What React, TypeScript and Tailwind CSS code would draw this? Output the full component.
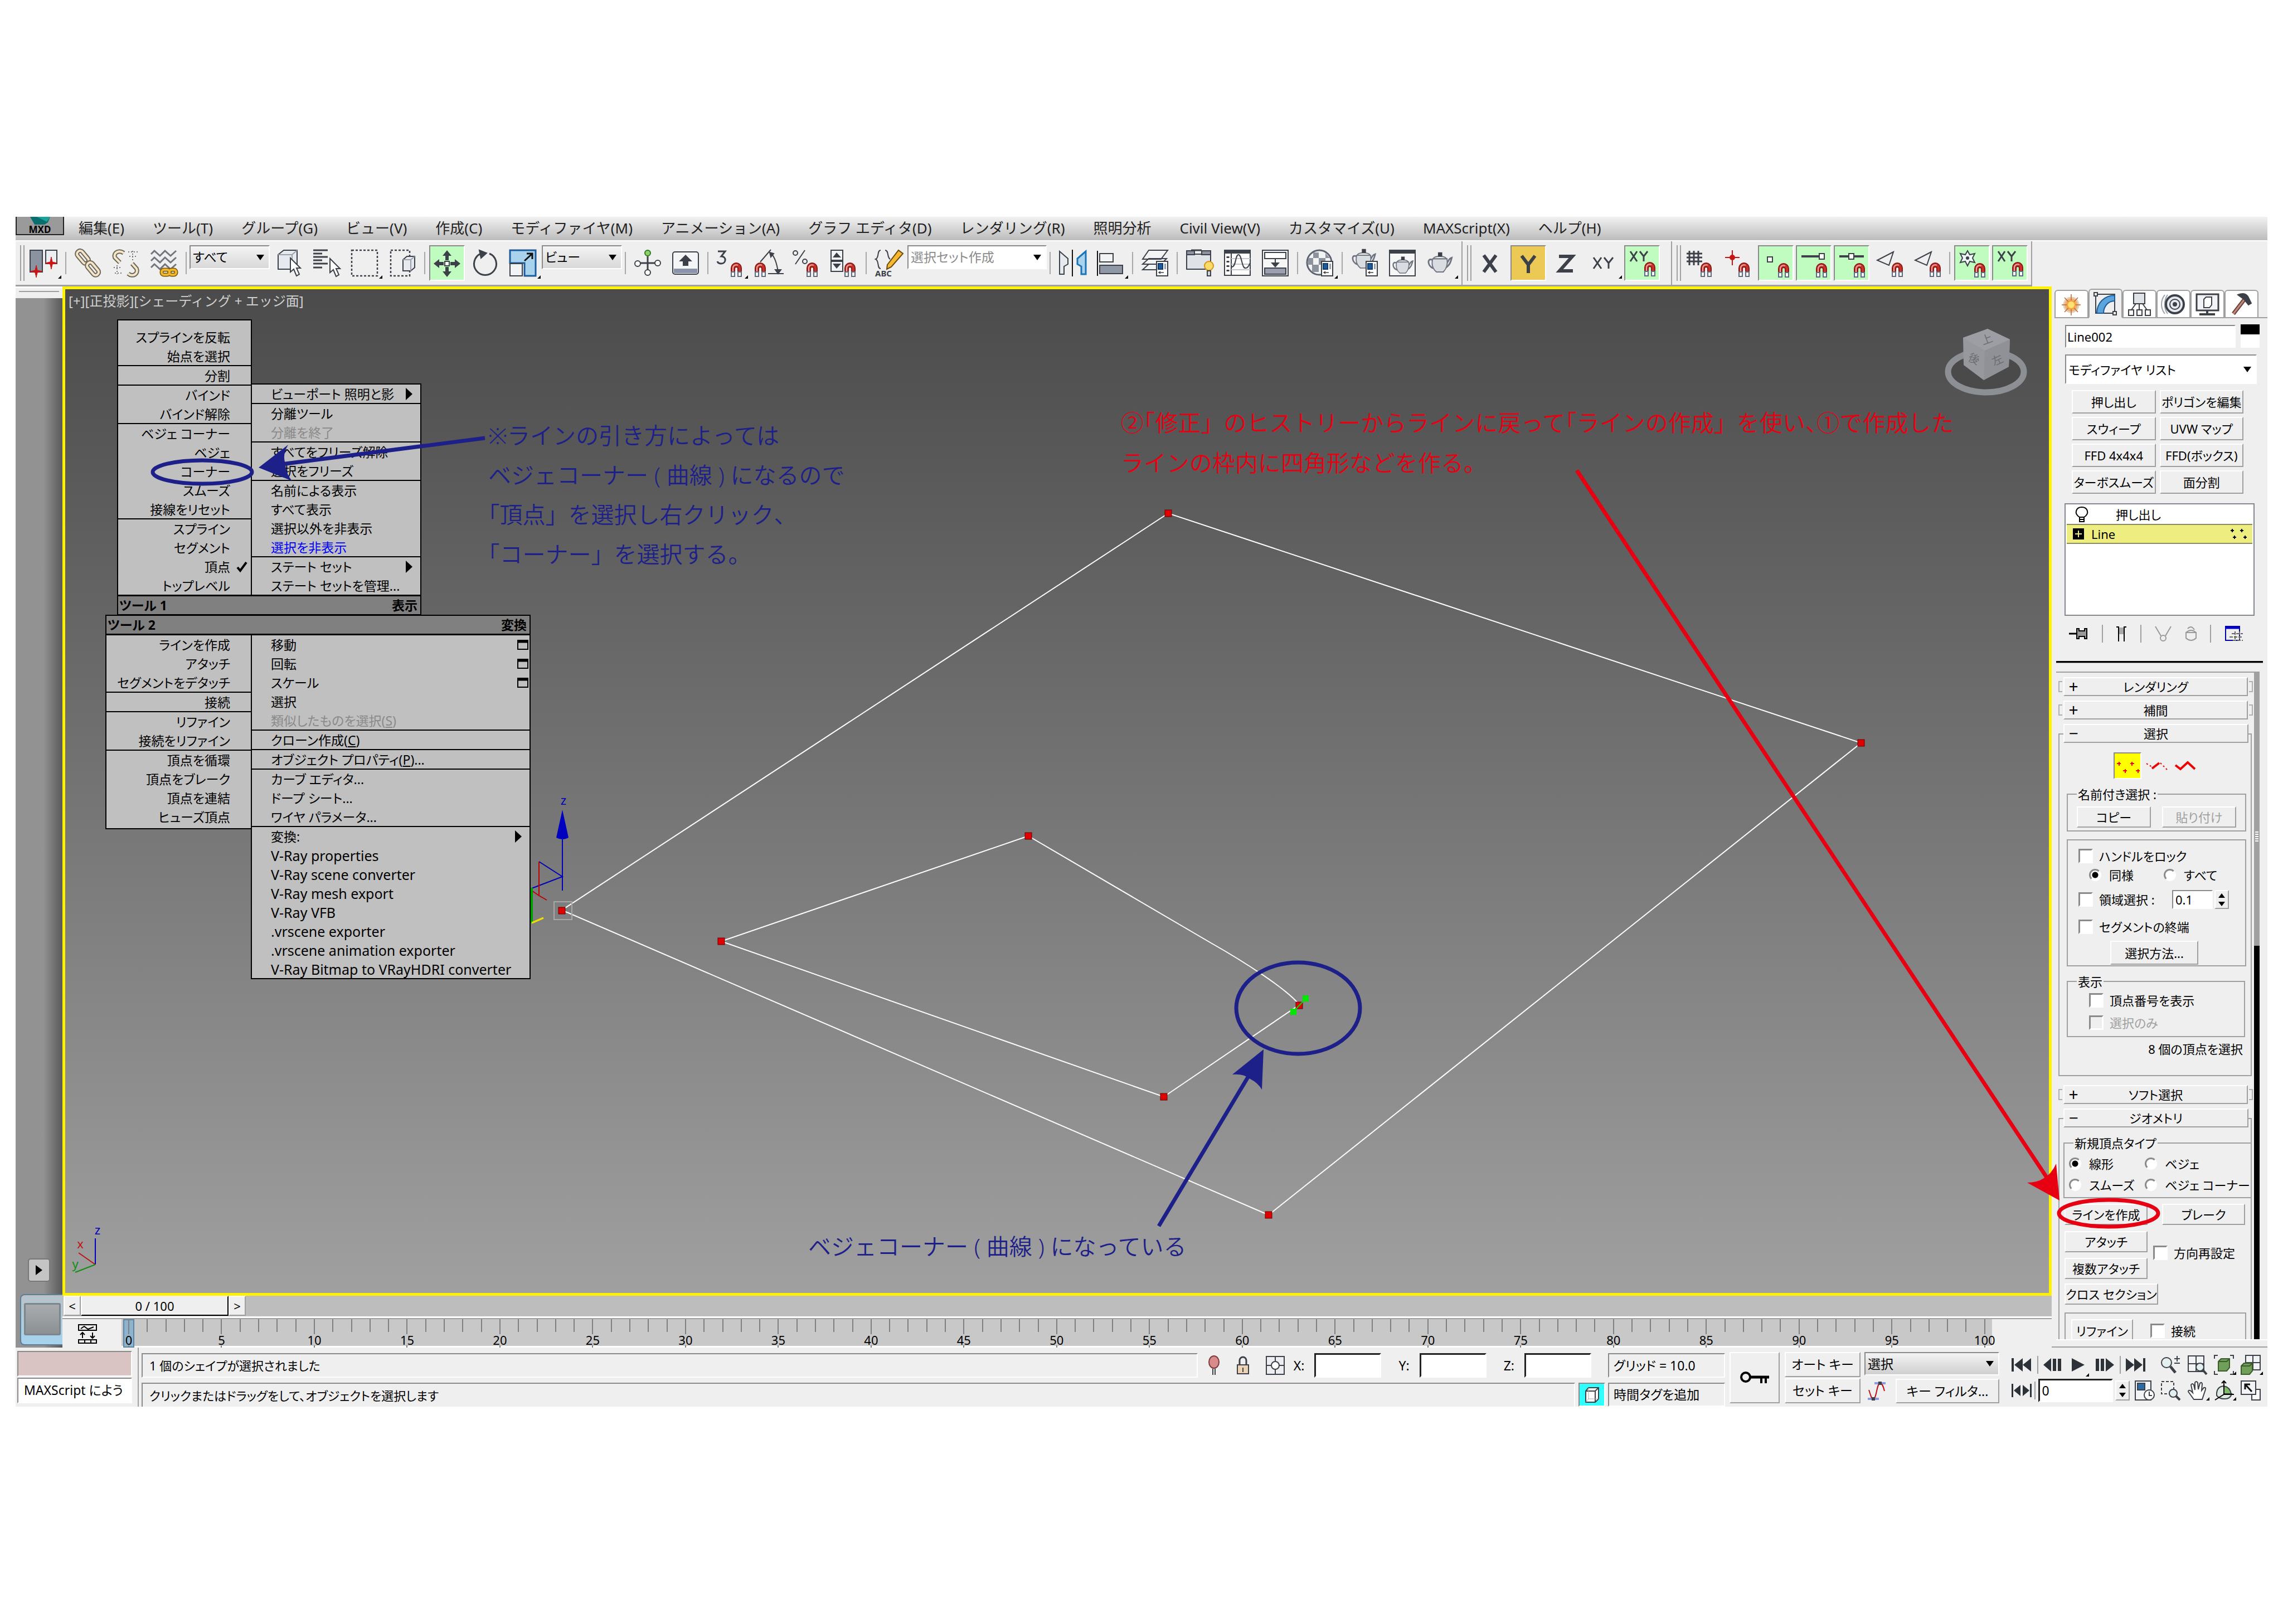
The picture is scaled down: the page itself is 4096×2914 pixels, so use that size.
import type {ReactNode} from 'react';
import clsx from 'clsx';

const ink = '#3c4048';

const sunken =
  'border-2 border-t-[#8a8a8a] border-l-[#8a8a8a] border-r-white border-b-white';
const raised =
  'border-2 border-t-white border-l-white border-r-[#a0a0a0] border-b-[#a0a0a0]';

/* ---------- icons ---------- */

const Icon = ({
  children,
  className = 'size-12',
  box = '0 0 48 48',
}: {
  children: ReactNode;
  className?: string;
  box?: string;
}) => (
  <svg
    viewBox={box}
    className={clsx('block shrink-0 overflow-visible', className)}
    fill="none"
    stroke={ink}
    strokeWidth={2}
    aria-hidden="true"
  >
    {children}
  </svg>
);

const Magnet = ({x = 25, y = 23}: {x?: number; y?: number}) => (
  <g transform={`translate(${x} ${y})`}>
    <path
      d="M1 24V10a9 9 0 0 1 18 0v14h-6V11a3 3 0 0 0-6 0v13z"
      fill="#c8322d"
      stroke="#8c1713"
      strokeWidth={2}
    />
    <path d="M4 16V10a6 6 0 0 1 9-5" stroke="#f0a9a4" strokeWidth={2} />
    <path
      d="M1 17h6v8H1zM13 17h6v8h-6z"
      fill="#fff"
      stroke="#5d6b80"
      strokeWidth={2}
    />
  </g>
);

const Star = ({x, y}: {x: number; y: number}) => (
  <path
    d={`M${x} ${y - 11}l2 9 9 2-9 2-2 9-2-9-9-2 9-2z`}
    fill="#c81414"
    stroke="#c81414"
    strokeWidth={1}
  />
);

const PageBadge = () => (
  <g>
    <path d="M27 21h20v26H27z" fill="#fff" />
    <path d="M30 25h8v10h-8z" fill="#1c5c9c" stroke="#123c70" />
    <path d="M41 25h3v10h-3z" fill="#9aa2ae" stroke="none" />
    <path d="M32 41h8M34 39l-3 2 3 2" strokeWidth={1.5} />
  </g>
);

const Cursor = ({x, y}: {x: number; y: number}) => (
  <path
    d={`M${x} ${y}v25l6-5 5 12 5-3-5-11h7z`}
    fill="#fff"
    strokeWidth={2}
  />
);

const Teapot = ({t}: {t?: string}) => (
  <g transform={t}>
    <path d="M10 17c-10-4-9 12 2 16M37 24c4-3 3-9 10-11-2 8-4 15-12 19" stroke="#6d7480" strokeWidth={3} />
    <path
      d="M11 15h27c2 12-2 20-7 25H18c-6-5-10-13-7-25z"
      fill="#d9dce1"
      stroke="#6d7480"
    />
    <path d="M12 15c2-6 22-6 25 0z" fill="#f2f3f5" stroke="#6d7480" />
    <path d="M22 4h6v6h-6z" fill={ink} />
  </g>
);

const icons: Record<string, ReactNode> = {
  undo: (
    <>
      <path d="M0 1h22v39H0z" fill="#8b93a0" />
      <path d="M28 1h20v24H28z" fill="#eceef2" />
      <Star x={11} y={39} />
      <Star x={38} y={24} />
    </>
  ),
  link: (
    <g strokeWidth={8} stroke="#6e6758">
      <rect x="2" y="8" width="26" height="11" rx="5" transform="rotate(50 15 13)" />
      <rect x="2" y="8" width="26" height="11" rx="5" transform="rotate(50 15 13)" stroke="#f4e6c8" strokeWidth={4} />
      <rect x="20" y="29" width="26" height="11" rx="5" transform="rotate(50 33 34)" />
      <rect x="20" y="29" width="26" height="11" rx="5" transform="rotate(50 33 34)" stroke="#f4e6c8" strokeWidth={4} />
    </g>
  ),
  unlink: (
    <>
      <g stroke="#6e6758" strokeWidth={8}>
        <path d="M20 6C12 0 1 5 4 14l9 9M28 43c8 7 19 0 15-9l-8-9" />
        <path d="M20 6C12 0 1 5 4 14l9 9M28 43c8 7 19 0 15-9l-8-9" stroke="#f4e6c8" strokeWidth={4} />
      </g>
      <path d="M28 4h18M30 12h14M36 2v18M2 32h14M4 42h12M8 28v16" strokeDasharray="2 3" stroke="#777" />
    </>
  ),
  wave: (
    <>
      <path d="M1 8l6-6 10 9 9-9 10 9 10-9M1 20l6-6 10 9 9-9 10 9 10-9M1 32l6-6 10 9 9-9 10 9 10-9" strokeWidth={3} stroke="#70757e" />
      <g stroke="#7a5500" strokeWidth={7}>
        <rect x="20" y="36" width="14" height="9" rx="4" />
        <rect x="34" y="36" width="12" height="9" rx="4" />
        <rect x="20" y="36" width="14" height="9" rx="4" stroke="#f1b62b" strokeWidth={4} />
        <rect x="34" y="36" width="12" height="9" rx="4" stroke="#f1b62b" strokeWidth={4} />
      </g>
    </>
  ),
  select: (
    <>
      <path d="M5 9l10-8h24v26l-9 8H5z" fill="#e6e9ee" />
      <path d="M5 9h25l9-8M30 9v26" stroke="#9aa1ac" />
      <Cursor x={27} y={15} />
    </>
  ),
  byName: (
    <>
      <path d="M0 1h26M0 7h16M0 13h26M0 19h16M0 25h26M0 32h16" strokeWidth={3} />
      <Cursor x={30} y={16} />
    </>
  ),
  region: <path d="M1 1h46v46H1z" strokeDasharray="4 3" strokeWidth={2.5} />,
  crossing: (
    <>
      <path d="M3 1h34v46H3z" strokeDasharray="4 3" strokeWidth={2.5} />
      <path d="M25 18l7-6h14v20l-7 6H25z" fill="#e6e9ee" />
      <path d="M25 18h14l7-6M39 18v20" stroke="#9aa1ac" />
    </>
  ),
  move: (
    <>
      <path d="M24 1l8 10h-5v8h-6v-8h-5zM24 49l8-10h-5v-8h-6v8h-5zM0 25l10-8v5h8v6h-8v5zM48 25l-10-8v5h-8v6h8v5z" fill={ink} stroke="none" />
      <path d="M20 21h8v8h-8z" fill="#fff" />
    </>
  ),
  rotate: (
    <>
      <path d="M32 7a20 20 0 1 1-15 0" strokeWidth={3} />
      <path d="M14 1l13 5-10 9z" fill={ink} />
    </>
  ),
  scale: (
    <>
      <path d="M1 1h46v46H27V24H1z" fill="#a9d3ec" stroke="#1c5c9c" strokeWidth={3} />
      <path d="M1 25h22v22H1z" fill="#f2f3f5" />
      <path d="M27 20L40 8M31 7h10v10" strokeWidth={3} stroke="#111" />
    </>
  ),
  pivot: (
    <>
      <path d="M24 12v24M11 24h26" strokeWidth={3} />
      <circle cx="24" cy="6" r="5" fill="#8fcf70" stroke="#2f7a1c" />
      <circle cx="6" cy="25" r="5" fill="#fff" />
      <circle cx="42" cy="24" r="5" fill="#fff" />
      <circle cx="24" cy="41" r="5" fill="#fff" />
    </>
  ),
  keyboard: (
    <>
      <rect x="1" y="4" width="46" height="40" rx="4" fill="#f4f5f7" />
      <path d="M3 34h42v8H3z" fill="#8b93a8" stroke="none" />
      <path d="M24 9l12 12h-7v8H19v-8h-7z" fill={ink} stroke="none" />
    </>
  ),
  snap3: (
    <>
      <path d="M2 3h13l-7 9c10 0 9 13 0 13-4 0-6-1-7-4" strokeWidth={3} />
      <Magnet />
    </>
  ),
  angle: (
    <>
      <path d="M10 22L29 0M29 6c8 8 11 20 13 34M24 43h28" />
      <path d="M27 5l7 2-5 6zM37 36h10l-5 7z" fill={ink} />
      <Magnet x={0} />
    </>
  ),
  percent: (
    <>
      <circle cx="5" cy="6" r="4" />
      <circle cx="22" cy="21" r="4" />
      <path d="M22 1L5 26" />
      <Magnet />
    </>
  ),
  spinner: (
    <>
      <path d="M1 1h21v18H1zM1 21h21v18H1z" fill="#f2f3f5" />
      <path d="M4 14l7-9 8 9zM4 25l7 9 8-9z" fill={ink} stroke="none" />
      <Magnet />
    </>
  ),
  named: (
    <>
      <path d="M10 1C3 1 8 14 1 17c7 3 2 17 9 17M18 1c7 0 3 13 9 16" />
      <path d="M22 27L42 1l8 6-21 24-8 4z" fill="#f5b82e" stroke="#6b4a12" />
      <text x="0" y="48" fontSize="15" fontWeight="700" fill={ink} stroke="none" fontFamily="Noto Sans">
        ABC
      </text>
    </>
  ),
  mirror: (
    <>
      <path d="M1 3l15 13v10l-7 4v14H1z" fill="#e6e9ee" />
      <path d="M24 0v48" stroke="#111" />
      <path d="M48 3L33 16v10l7 4v14h8z" fill="#a9d3ec" stroke="#1c74b8" strokeWidth={3} />
    </>
  ),
  align: (
    <>
      <path d="M1 2v45" stroke="#111" />
      <path d="M5 7h24v15H5z" fill="#f2f3f5" />
      <path d="M5 28h41v15H5z" fill="#9198a5" />
    </>
  ),
  layers: (
    <>
      <path d="M13 26h32l-10 10H2zM13 16h32L35 26H2zM13 1h34L35 17H2z" fill="#f2f3f5" />
      <PageBadge />
    </>
  ),
  ribbon: (
    <>
      <path d="M1 8h43v27H1z" fill="#dfe2e7" />
      <path d="M1 2h14v7H1zM28 2h16v7H28z" fill="#8b93a0" />
      <path d="M9 1h19" strokeWidth={3} />
      <circle cx="41" cy="29" r="8" fill="#fbdc6a" stroke="#d99414" />
      <path d="M38 38h6v9h-6z" fill="#cfd4dc" />
    </>
  ),
  curve: (
    <>
      <path d="M1 1h46v45H1z" fill="#fff" />
      <path d="M1 4h46" strokeWidth={6} />
      <path d="M13 6v40" />
      <path d="M7 12v30" strokeDasharray="3 5" strokeWidth={5} />
      <path d="M13 16h34M13 26h34M13 36h34" stroke="#c4c8ce" />
      <path d="M14 31c8 0 6-22 12-22s6 26 13 24c4 0 5-4 8-9" />
    </>
  ),
  schematic: (
    <>
      <path d="M1 1h46v46H1z" fill="#f6f6f6" />
      <path d="M5 5h38v11H5z" fill="#fff" />
      <path d="M5 33h38v11H5z" fill="#9aa0b0" />
      <path d="M24 17v12" />
      <path d="M16 23h16l-8 9z" fill={ink} stroke="none" />
    </>
  ),
  material: (
    <>
      <circle cx="23" cy="23" r="22" fill="#f2f3f5" stroke="#5d636d" strokeWidth={3} />
      <path d="M12 5h10v10H12zM22 15h12v12H22zM10 27h12v13H10zM34 6l8 9h-8zM3 15h9v12H3z" fill="#8d939d" stroke="none" />
      <PageBadge />
    </>
  ),
  renderSetup: (
    <>
      <Teapot t="translate(0 -4) scale(.92)" />
      <PageBadge />
    </>
  ),
  frame: (
    <>
      <path d="M1 1h46v46H1z" fill="#f6f6f6" />
      <path d="M1 4h46" strokeWidth={6} />
      <Teapot t="translate(5 10) scale(.8)" />
    </>
  ),
  teapot: <Teapot t="translate(0 2) scale(.95)" />,
  axisX: <path d="M12 10l22 30M34 10L12 40" strokeWidth={6} />,
  axisY: <path d="M12 11l12 16 12-16M24 26v16" strokeWidth={6} />,
  axisZ: <path d="M11 12h24L12 38h24" strokeWidth={6} />,
  axisXY: <path d="M5 14l14 20M19 14L5 34M24 14l8 10 8-10M32 24v10" strokeWidth={3} />,
  axisXYSnap: (
    <>
      <path d="M3 3l12 18M15 3L3 21M20 3l7 9 7-9M27 12v9" strokeWidth={3} />
      <Magnet x={28} y={22} />
    </>
  ),
  grid: (
    <>
      <path d="M0 7h28M0 14h28M0 21h28M5 2v26M13 2v26M21 2v26" strokeWidth={3} />
      <Magnet />
    </>
  ),
  pivotSnap: (
    <>
      <path d="M14 1v27M1 14h26" stroke="#c81414" />
      <circle cx="14" cy="14" r="5" fill="#c81414" stroke="none" />
      <Magnet />
    </>
  ),
  vertexSnap: (
    <>
      <path d="M9 13h9v9H9z" fill="#fff" />
      <Magnet x={28} y={24} />
    </>
  ),
  endSnap: (
    <>
      <path d="M2 12h34" strokeWidth={4} />
      <path d="M34 7h9v10h-9z" fill="#fff" />
      <Magnet x={28} y={24} />
    </>
  ),
  midSnap: (
    <>
      <path d="M2 12h44" strokeWidth={4} />
      <path d="M19 7h9v10h-9z" fill="#fff" />
      <Magnet x={28} y={24} />
    </>
  ),
  faceSnap: (
    <>
      <path d="M31 4L2 19l21 9z" />
      <Magnet x={28} />
    </>
  ),
  frozen: (
    <>
      <path d="M16 2l4 7 9-2-4 8 4 8-9-2-4 8-4-8-9 2 4-8-4-8 9 2z" fill="#eef6fa" />
      <circle cx="16" cy="15" r="2" fill={ink} />
      <Magnet x={28} y={24} />
    </>
  ),
};

/* ---------- toolbar ---------- */

type Tool = {icon: string; label: string; on?: 'green' | 'gold'; flyout?: boolean};

const ToolButton = ({icon, label, on, flyout}: Tool) => (
  <div className="w-[68px] h-16 shrink-0 flex items-center justify-center">
    <button
      type="button"
      aria-label={label}
      className={clsx(
        'relative size-16 flex items-center justify-center',
        on && sunken,
        on === 'green' && 'bg-[#c0fcc0]',
        on === 'gold' && 'bg-[#ecc954]',
      )}
    >
      <Icon>{icons[icon]}</Icon>
      {flyout && (
        <svg viewBox="0 0 6 6" className="absolute right-0 bottom-1 size-[6px]" aria-hidden="true">
          <path d="M6 0v6H0z" fill="#000" />
        </svg>
      )}
    </button>
  </div>
);

const Tools = ({items}: {items: Tool[]}) => (
  <>
    {items.map((t) => (
      <ToolButton key={t.label} {...t} />
    ))}
  </>
);

const Sep = () => (
  <div className="w-3 shrink-0 flex justify-center">
    <div className="w-[2px] h-10 bg-[#a8a8a8]" />
  </div>
);

const Grip = () => (
  <div className="flex gap-1 h-16 ml-2 shrink-0">
    <div className="w-[2px] bg-[#a0a0a0]" />
    <div className="w-[2px] bg-[#a0a0a0]" />
  </div>
);

const Combo = ({
  label,
  value,
  className,
}: {
  label: string;
  value: string;
  className?: string;
}) => (
  <div className={clsx('relative shrink-0', sunken, className)}>
    <select
      aria-label={label}
      className="appearance-none block size-full px-1 leading-none outline-none bg-transparent"
    >
      <option>{value}</option>
    </select>
    <svg
      viewBox="0 0 14 10"
      className="absolute right-2 top-1/2 -mt-[5px] w-[14px] h-[10px] pointer-events-none"
      aria-hidden="true"
    >
      <path d="M0 0h14L7 10z" fill="#000" />
    </svg>
  </div>
);

const menus = [
  '編集(E)',
  'ツール(T)',
  'グループ(G)',
  'ビュー(V)',
  '作成(C)',
  'モディファイヤ(M)',
  'アニメーション(A)',
  'グラフ エディタ(D)',
  'レンダリング(R)',
  '照明分析',
  'Civil View(V)',
  'カスタマイズ(U)',
  'MAXScript(X)',
  'ヘルプ(H)',
];

const MenuBar = () => (
  <nav className="h-[42px] shrink-0 flex items-start bg-linear-to-b from-[#f2f2f2] to-[#bcbcbc]">
    <button
      type="button"
      className="w-[87px] h-[33px] shrink-0 border-2 border-t-0 border-[#222] bg-[#9a9a9a] flex flex-col items-center justify-between text-[17px] leading-[16px] font-bold"
    >
      <svg viewBox="0 0 36 14" className="w-9 h-[14px]" aria-hidden="true">
        <path d="M0 0h36l-4 10-6 4H8z" fill="#0b6e6e" />
        <path d="M12 0h24l-6 9z" fill="#19a39d" />
      </svg>
      MXD
    </button>
    <div className="flex gap-[51px] pl-[26px] pt-[5px] text-[26px] leading-[30px] whitespace-nowrap text-[#222]">
      {menus.map((m) => (
        <button type="button" key={m}>
          {m}
        </button>
      ))}
    </div>
  </nav>
);

const MainToolbar = () => (
  <div className="h-[83px] shrink-0 flex bg-[#efefef] border-t-2 border-t-white text-[23px] [font-feature-settings:'palt']">
    <div className="flex items-center border-b-3 border-r-2 border-[#a0a0a0] pr-1">
      <Grip />
      <Tools items={[{icon: 'undo', label: 'シーン状態', flyout: true}]} />
      <Sep />
      <Tools
        items={[
          {icon: 'link', label: 'リンク'},
          {icon: 'unlink', label: 'リンク解除'},
          {icon: 'wave', label: 'スペース ワープにバインド'},
        ]}
      />
      <Sep />
      <Combo label="選択フィルタ" value="すべて" className="w-36 h-[43px] self-start mt-[7px] bg-linear-to-b from-[#f4f4f4] to-[#d8d8d8]" />
      <Tools
        items={[
          {icon: 'select', label: 'オブジェクト選択'},
          {icon: 'byName', label: '名前による選択'},
          {icon: 'region', label: '矩形選択領域', flyout: true},
          {icon: 'crossing', label: '領域内/交差'},
        ]}
      />
      <Sep />
      <Tools
        items={[
          {icon: 'move', label: '選択して移動', on: 'green'},
          {icon: 'rotate', label: '選択して回転'},
          {icon: 'scale', label: '選択してスケール', flyout: true},
        ]}
      />
      <Combo label="参照座標系" value="ビュー" className="w-36 h-[43px] self-start mt-[7px] bg-linear-to-b from-[#f4f4f4] to-[#d8d8d8]" />
      <Sep />
      <Tools
        items={[
          {icon: 'pivot', label: '基点の中心'},
          {icon: 'keyboard', label: 'キーボード ショートカット'},
        ]}
      />
      <Sep />
      <Tools
        items={[
          {icon: 'snap3', label: 'スナップ', flyout: true},
          {icon: 'angle', label: '角度スナップ'},
          {icon: 'percent', label: 'パーセント スナップ'},
          {icon: 'spinner', label: 'スピナー スナップ'},
        ]}
      />
      <Sep />
      <Tools items={[{icon: 'named', label: '名前付き選択セットを編集'}]} />
      <Combo label="名前付き選択セット" value="選択セット作成" className="w-[250px] h-[43px] self-start mt-[7px] bg-white text-[#8a8a8a]" />
      <Sep />
      <Tools
        items={[
          {icon: 'mirror', label: 'ミラー'},
          {icon: 'align', label: '位置合わせ', flyout: true},
        ]}
      />
      <Sep />
      <Tools items={[{icon: 'layers', label: '画層を管理'}]} />
      <Sep />
      <Tools
        items={[
          {icon: 'ribbon', label: 'リボン'},
          {icon: 'curve', label: 'カーブ エディタ'},
          {icon: 'schematic', label: 'スケマティック ビュー'},
        ]}
      />
      <Sep />
      <Tools items={[{icon: 'material', label: 'マテリアル エディタ', flyout: true}]} />
      <Sep />
      <Tools
        items={[
          {icon: 'renderSetup', label: 'レンダリング設定'},
          {icon: 'frame', label: 'レンダリング フレーム ウィンドウ'},
          {icon: 'teapot', label: 'プロダクション レンダリング', flyout: true},
        ]}
      />
    </div>
    <div className="flex items-center border-b-3 border-r-2 border-[#a0a0a0] pr-[18px]">
      <Grip />
      <Tools
        items={[
          {icon: 'axisX', label: 'X'},
          {icon: 'axisY', label: 'Y', on: 'gold'},
          {icon: 'axisZ', label: 'Z'},
          {icon: 'axisXY', label: 'XY', flyout: true},
          {icon: 'axisXYSnap', label: 'XY スナップ', on: 'green'},
        ]}
      />
    </div>
    <div className="flex items-center border-b-3 border-r-2 border-[#a0a0a0] pr-1">
      <Grip />
      <Tools
        items={[
          {icon: 'grid', label: 'グリッド点にスナップ'},
          {icon: 'pivotSnap', label: '基点にスナップ'},
          {icon: 'vertexSnap', label: '頂点にスナップ', on: 'green'},
          {icon: 'endSnap', label: '端点にスナップ', on: 'green'},
          {icon: 'midSnap', label: '中点にスナップ', on: 'green'},
          {icon: 'faceSnap', label: 'エッジにスナップ'},
          {icon: 'faceSnap', label: '面にスナップ'},
        ]}
      />
      <Sep />
      <Tools
        items={[
          {icon: 'frozen', label: 'フリーズ オブジェクトにスナップ', on: 'green'},
          {icon: 'axisXYSnap', label: '軸制約でスナップ', on: 'green'},
        ]}
      />
    </div>
  </div>
);

/* ---------- viewport ---------- */

const Vertex = ({x, y}: {x: number; y: number}) => (
  <rect x={x - 6} y={y - 6} width="12" height="12" fill="#e00000" stroke="#600" strokeWidth={1} />
);

const Scene = () => (
  <svg
    viewBox="116 518 3559 1801"
    preserveAspectRatio="none"
    className="absolute inset-0 size-full"
    fill="none"
    strokeWidth={2}
    aria-hidden="true"
  >
    <path d="M1007 1632L2095 920l1243 412-1063 847z" stroke="#fff" />
    <path d="M1844 1499L1293 1688l794 279 243-165C2310 1775 2230 1724 2170 1690z" stroke="#fff" />
    <rect x="993" y="1617" width="32" height="32" stroke="#a8a8a8" />
    <path d="M1008 1500v97M966 1545l42 27-55 21" stroke="#0000b8" />
    <path d="M1008 1452l-11 50q11 6 22 0z" fill="#0000c0" />
    <path d="M966 1545v61l14 8M953 1597l13 9" stroke="#c00000" />
    <path d="M953 1592v63" stroke="#00a000" strokeWidth={4} />
    <path d="M953 1655l21-9" stroke="#f0e000" strokeWidth={3} />
    {[
      [1007, 1633],
      [2095, 920],
      [3338, 1332],
      [2275, 2179],
      [1844, 1499],
      [1293, 1688],
      [2087, 1967],
      [2330, 1803],
    ].map(([x, y]) => (
      <Vertex key={`${x}-${y}`} x={x} y={y} />
    ))}
    <path d="M2320 1814l22-24" stroke="#00e000" />
    <path d="M2336 1785h11v11h-11zM2314 1809h11v11h-11z" fill="#00e800" />
    <path d="M170 2221v47" stroke="#0000b8" />
    <path d="M170 2268l-30-21" stroke="#b81414" />
    <path d="M170 2268l-36 14" stroke="#109010" />
    <g fontFamily="Noto Sans" textAnchor="middle" stroke="none">
      <text x="1010" y="1443" fontSize="22" fill="#0000b8">z</text>
      <text x="174" y="2214" fontSize="22" fill="#0000b8">z</text>
      <text x="143" y="2239" fontSize="22" fill="#c01414">x</text>
      <text x="134" y="2275" fontSize="22" fill="#109010">y</text>
    </g>
    <ellipse cx="3562" cy="666" rx="68" ry="37" fill="#4a4a4a" stroke="#8c8f94" strokeWidth={11} />
    <path d="M3565 589l40 19-2 49-45 24-36-27-1-49z" fill="#96989d" />
    <path d="M3565 589l40 19-45 20-39-23z" fill="#9c9ea3" />
    <path d="M3560 628l45-20-2 49-45 24z" fill="#8f9196" />
    <g fontFamily="Noto Sans CJK JP" fill="#6c6e73" stroke="none" textAnchor="middle" fontSize="20">
      <text x="3564" y="615" transform="rotate(-20 3564 609)">上</text>
      <text x="3540" y="650" transform="rotate(25 3540 644)">後</text>
      <text x="3583" y="652" transform="rotate(-25 3583 646)">左</text>
    </g>
  </svg>
);

type Entry = {text: string; key?: string; tail?: string; mark?: 'sub' | 'check' | 'box'; tone?: string};

const e = (text: string, extra: Partial<Entry> = {}): Entry => ({text, ...extra});

const toolsOne: Entry[][] = [
  [e('スプラインを反転'), e('始点を選択')],
  [e('分割')],
  [e('バインド'), e('バインド解除')],
  [e('ベジェ コーナー'), e('ベジェ'), e('コーナー'), e('スムーズ'), e('接線をリセット')],
  [e('スプライン'), e('セグメント'), e('頂点', {mark: 'check'}), e('トップレベル')],
];

const display: Entry[][] = [
  [e('ビューポート 照明と影', {mark: 'sub'})],
  [e('分離ツール'), e('分離を終了', {tone: 'text-[#8a8a8a]'})],
  [e('すべてをフリーズ解除'), e('選択をフリーズ')],
  [
    e('名前による表示'),
    e('すべて表示'),
    e('選択以外を非表示'),
    e('選択を非表示', {tone: 'text-[#0000ff]'}),
  ],
  [e('ステート セット', {mark: 'sub'}), e('ステート セットを管理...')],
];

const toolsTwo: Entry[][] = [
  [e('ラインを作成'), e('アタッチ'), e('セグメントをデタッチ')],
  [e('接続')],
  [e('リファイン'), e('接続をリファイン')],
  [e('頂点を循環'), e('頂点をブレーク'), e('頂点を連結'), e('ヒューズ頂点')],
];

const latin = {tone: 'text-[25px]'};

const transform: Entry[][] = [
  [
    e('移動', {mark: 'box'}),
    e('回転', {mark: 'box'}),
    e('スケール', {mark: 'box'}),
    e('選択'),
    e('類似したものを選択(', {key: 'S', tail: ')', tone: 'text-[#8a8a8a]'}),
  ],
  [e('クローン作成(', {key: 'C', tail: ')'})],
  [e('オブジェクト プロパティ(', {key: 'P', tail: ')...'})],
  [e('カーブ エディタ...'), e('ドープ シート...'), e('ワイヤ パラメータ...')],
  [
    e('変換:', {mark: 'sub'}),
    e('V-Ray properties', latin),
    e('V-Ray scene converter', latin),
    e('V-Ray mesh export', latin),
    e('V-Ray VFB', latin),
    e('.vrscene exporter', latin),
    e('.vrscene animation exporter', latin),
    e('V-Ray Bitmap to VRayHDRI converter', latin),
  ],
];

const Mark = ({kind}: {kind: Entry['mark']}) => {
  if (kind === 'check')
    return (
      <Icon box="0 0 20 20" className="size-5">
        <path d="M2 11l5 6L18 2" stroke="#000" strokeWidth={4} />
      </Icon>
    );
  if (kind === 'box')
    return (
      <Icon box="0 0 20 18" className="w-5 h-[18px]">
        <path d="M1 1h18v16H1z" fill="#c0c0c0" stroke="#000" />
        <path d="M1 3h18" stroke="#000" strokeWidth={5} />
      </Icon>
    );
  return (
    <Icon box="0 0 12 22" className="w-3 h-[22px]">
      <path d="M0 0l12 11L0 22z" fill="#000" stroke="none" />
    </Icon>
  );
};

const Quad = ({
  groups,
  align,
  className,
}: {
  groups: Entry[][];
  align: 'left' | 'right';
  className?: string;
}) => (
  <div className={clsx('bg-[#c0c0c0] border-2 border-black', className)}>
    {groups.map((group, i) => (
      <div key={i} className={clsx('-mb-px', i > 0 && 'border-t-2 border-black')}>
        {group.map(({text, key, tail, mark, tone}) => (
          <button
            type="button"
            key={text}
            className={clsx(
              'w-full h-[34px] flex items-center whitespace-nowrap',
              align === 'right' ? 'justify-end' : 'pl-[34px] justify-between',
              mark === 'box' && 'pr-[2px]',
              mark === 'sub' && 'pr-[14px]',
              align === 'right' && (mark ? 'pr-[6px] gap-[11px]' : 'pr-[37px]'),
              tone,
            )}
          >
            <span>
              {text}
              {key && <u>{key}</u>}
              {tail}
            </span>
            {mark && <Mark kind={mark} />}
          </button>
        ))}
      </div>
    ))}
  </div>
);

const QuadTitle = ({left, right}: {left: string; right: string}) => (
  <div className="flex h-9 -my-px border-2 border-black bg-[#808080] font-bold items-center">
    <span className="pl-[2px] w-[239px]">{left}</span>
    <span className="flex-1 text-right pr-[5px]">{right}</span>
  </div>
);

const QuadMenu = () => (
  <div className="absolute left-[72px] top-[54px] text-[23px] leading-none [font-feature-settings:'palt']">
    <div className="ml-[21px] w-[546px]">
      <div className="flex items-end">
        <Quad groups={toolsOne} align="right" className="w-[242px] pt-[13px]" />
        <Quad groups={display} align="left" className="flex-1 -ml-[2px]" />
      </div>
      <QuadTitle left="ツール 1" right="表示" />
    </div>
    <div className="w-[763px]">
      <QuadTitle left="ツール 2" right="変換" />
      <div className="flex items-start">
        <Quad groups={toolsTwo} align="right" className="w-[263px] pb-1" />
        <Quad groups={transform} align="left" className="flex-1 -ml-[2px]" />
      </div>
    </div>
  </div>
);

const Viewport = () => (
  <main className="relative flex-1 min-h-0 border-[5px] border-[#fff200] bg-linear-to-b from-[#4b4b4b] to-[#a0a0a0] overflow-hidden">
    <Scene />
    <p className="absolute left-[6px] top-[6px] text-2xl leading-[30px] text-[#cfcfcf] whitespace-nowrap">
      [+][正投影][シェーディング + エッジ面]
    </p>
    <QuadMenu />
  </main>
);

/* ---------- left rail ---------- */

const Rail = () => (
  <aside className="w-[84px] shrink-0 flex flex-col bg-[#efefef] border-t-3 border-white">
    <div className="h-[2px] mx-[6px] mt-[5px] mb-[11px] bg-[#a0a0a0]" />
    <div className="flex-1 flex flex-col justify-end items-end bg-linear-to-r from-[#929292] from-60% to-[#5a5a5a] pb-1">
      <button
        type="button"
        aria-label="展開"
        className="w-10 h-[42px] mr-[22px] mb-[22px] rounded-[5px] border-2 border-[#777] bg-[#c4c4c4] flex items-center justify-center"
      >
        <Icon box="0 0 12 18" className="w-3 h-[18px]">
          <path d="M0 0l12 9L0 18z" fill="#000" stroke="none" />
        </Icon>
      </button>
      <div className="w-[76px] h-[92px] rounded-l-lg border-2 border-r-0 border-[#5b7f97] bg-linear-to-b from-[#b8c2c8] to-[#a6d3ee] pl-[5px] pt-[14px]">
        <div className="w-[66px] h-[58px] rounded-[3px] border-3 border-[#7b868d] bg-linear-to-b from-[#a8abad] to-[#8b9194]" />
      </div>
    </div>
  </aside>
);

/* ---------- command panel ---------- */

const tabs: {label: string; icon: ReactNode}[] = [
  {
    label: '作成',
    icon: (
      <>
        <circle cx="20" cy="22" r="13" fill="#eeb070" stroke="#e0d0b8" strokeWidth={3} />
        <path d="M20 3v38M3 22h34M8 9l24 26M32 9L8 35" stroke="#c8642e" strokeWidth={1.5} />
        <circle cx="20" cy="22" r="7" fill="#ffe070" stroke="#f2a33c" />
      </>
    ),
  },
  {
    label: '修正',
    icon: (
      <>
        <path d="M3 4h34v34H3z" />
        <path d="M5 38C5 20 18 6 37 6v10c-12 0-20 10-20 22z" fill="#5ba5dc" stroke="#1c5c9c" />
        <path d="M0 1h6v6H0zM34 35h6v6h-6z" fill="#fff" />
      </>
    ),
  },
  {
    label: '階層',
    icon: (
      <>
        <path d="M10 1h20v19H10z" fill="#dfe2e7" />
        <path d="M20 20v12M14 20L6 31M26 20l8 11" />
        <path d="M1 31h9v10H1zM16 31h9v10h-9zM31 31h9v10h-9z" fill="#fff" />
      </>
    ),
  },
  {
    label: 'モーション',
    icon: (
      <>
        <path d="M5 4c-8 10-8 24 0 34M10 4c-7 10-7 24 0 34" stroke="#9aa1ac" />
        <circle cx="23" cy="21" r="16" fill="#e6e9ee" strokeWidth={4} />
        <circle cx="23" cy="21" r="9" />
        <circle cx="23" cy="21" r="3" fill={ink} />
      </>
    ),
  },
  {
    label: '表示',
    icon: (
      <>
        <path d="M1 3h39v29H1z" fill="#f2f3f5" strokeWidth={3} />
        <path d="M14 12l4-4h10v14l-4 5H14z" fill="#fff" />
        <path d="M6 39h28M20 33v6" strokeWidth={4} />
      </>
    ),
  },
  {
    label: 'ユーティリティ',
    icon: (
      <>
        <path d="M26 12L6 38" stroke="#6a4038" strokeWidth={7} />
        <path d="M26 12L6 38" stroke="#c08a7c" strokeWidth={3} />
        <path d="M14 4q12-5 18 3l6 12-5 3-8-10z" fill={ink} />
      </>
    ),
  },
];

const PushButton = ({
  children,
  className,
  disabled,
}: {
  children: ReactNode;
  className?: string;
  disabled?: boolean;
}) => (
  <button
    type="button"
    disabled={disabled}
    className={clsx(
      'bg-[#efefef] whitespace-nowrap flex items-center justify-center disabled:text-[#a0a0a0]',
      raised,
      className,
    )}
  >
    {children}
  </button>
);

const Check = ({label, disabled, className}: {label: string; disabled?: boolean; className?: string}) => (
  <label className={clsx('flex items-center gap-[11px] whitespace-nowrap', disabled && 'text-[#a0a0a0]', className)}>
    <input
      type="checkbox"
      disabled={disabled}
      className="appearance-none size-[26px] shrink-0 bg-white disabled:bg-[#efefef] border-3 border-t-[#8a8a8a] border-l-[#8a8a8a] border-r-white border-b-white"
    />
    {label}
  </label>
);

const Radio = ({
  label,
  name,
  checked,
  className,
}: {
  label: string;
  name: string;
  checked?: boolean;
  className?: string;
}) => (
  <label className={clsx('flex items-center gap-[14px] whitespace-nowrap', className)}>
    <input
      type="radio"
      name={name}
      defaultChecked={checked}
      className="appearance-none size-[22px] shrink-0 rounded-full bg-white border-3 border-t-[#8a8a8a] border-l-[#8a8a8a] border-r-white border-b-white checked:bg-[radial-gradient(circle,#000_5px,#fff_6px)]"
    />
    {label}
  </label>
);

const SpinArrows = () => (
  <div className={clsx('w-[26px] h-full flex flex-col', raised)}>
    {['M0 8h12L6 0z', 'M0 0h12L6 8z'].map((d, i) => (
      <button
        type="button"
        key={d}
        aria-label={i ? '減らす' : '増やす'}
        className="flex-1 flex items-center justify-center"
      >
        <Icon box="0 0 12 8" className="w-3 h-2">
          <path d={d} fill="#000" stroke="none" />
        </Icon>
      </button>
    ))}
  </div>
);

const RollHeader = ({title, open, className}: {title: string; open?: boolean; className?: string}) => (
  <button
    type="button"
    className={clsx('h-[34px] flex items-center bg-[#efefef]', raised, className)}
  >
    <span className="w-8 text-[30px] leading-[26px] text-center">{open ? '−' : '+'}</span>
    <span className="flex-1 text-center pr-8">{title}</span>
  </button>
);

const ClosedRoll = ({title}: {title: string}) => (
  <div className="flex items-center gap-[2px] pl-1 pr-[2px]">
    <div className="w-[7px] h-5 border-2 border-r-0 border-[#b0b0b0]" />
    <RollHeader title={title} className="flex-1" />
    <div className="w-[7px] h-5 border-2 border-l-0 border-[#b0b0b0]" />
  </div>
);

const OpenRoll = ({title, children, className}: {title: string; children: ReactNode; className?: string}) => (
  <section className={clsx('mx-1 mt-[25px] border-2 border-[#a0a0a0]', className)}>
    <RollHeader title={title} open className="-mt-[19px] ml-[7px] w-[332px]" />
    {children}
  </section>
);

const StackTools = () => (
  <div className="mt-[15px] h-[34px] ml-[31px] mr-11 flex items-center justify-between">
    <button type="button" aria-label="スタックを固定">
      <Icon box="0 0 34 26" className="w-[34px] h-[26px]">
        <path d="M0 13h13" stroke="#000" strokeWidth={3} />
        <path d="M14 4h4v4h10V4h4v18h-4v-4H18v4h-4z" fill="#999" stroke="#000" strokeWidth={2} />
      </Icon>
    </button>
    <div className="w-[2px] h-8 bg-[#a0a0a0]" />
    <button type="button" aria-label="最終結果を表示">
      <Icon box="0 0 18 28" className="w-[18px] h-7">
        <path d="M4 3h10v12H4z" fill="#aaa" stroke="none" />
        <path d="M0 2h4v26M18 2h-4v26" stroke="#000" />
      </Icon>
    </button>
    <div className="w-[2px] h-8 bg-[#a0a0a0]" />
    <button type="button" aria-label="個別にする" disabled>
      <Icon box="0 0 30 28" className="w-[30px] h-7">
        <path d="M1 1l10 17M29 1L19 18" stroke="#999" />
        <circle cx="15" cy="22" r="5" stroke="#999" />
      </Icon>
    </button>
    <button type="button" aria-label="モディファイヤを除去" disabled>
      <Icon box="0 0 20 28" className="w-5 h-7">
        <path d="M1 12h18v10q-9 8-18 0zM1 12q9-8 18 0M4 5q6-7 12 2" stroke="#999" />
      </Icon>
    </button>
    <div className="w-[2px] h-8 bg-[#a0a0a0]" />
    <button type="button" aria-label="モディファイヤ セットを設定">
      <Icon box="0 0 32 28" className="w-8 h-7">
        <path d="M1 1h25v25H1z" fill="#eee" stroke="#0000a8" />
        <path d="M1 3h25" stroke="#0000c8" strokeWidth={5} />
        <path d="M12 14h20M8 20h24M14 26h18M18 10v17M26 10v17" stroke="#666" strokeDasharray="6 2" />
      </Icon>
    </button>
  </div>
);

const CommandPanel = () => (
  <aside className="w-[387px] shrink-0 bg-[#efefef] flex flex-col min-h-0 border-b-2 border-[#a0a0a0] text-[22px] leading-none [font-feature-settings:'palt']">
    <div className="h-[57px] shrink-0 flex items-end pl-[5px]">
      {tabs.map(({label, icon}, i) => (
        <button
          type="button"
          key={label}
          aria-label={label}
          className={clsx(
            'w-[61px] flex items-center justify-center rounded-t-md border-2 border-[#a0a0a0]',
            i === 1 ? 'h-[53px] bg-[#efefef] border-b-transparent' : 'h-[51px] bg-white',
          )}
        >
          <Icon box="0 0 42 42" className="size-[42px]">
            {icon}
          </Icon>
        </button>
      ))}
      <div className="flex-1 border-b-2 border-[#a0a0a0]" />
    </div>

    <div className="mt-3 ml-6 h-[41px] shrink-0 flex gap-[9px]">
      <input
        aria-label="オブジェクト名"
        defaultValue="Line002"
        className={clsx('w-[306px] px-[2px] bg-white', sunken)}
      />
      <button type="button" aria-label="オブジェクトカラー" className="w-[34px] bg-white">
        <div className="h-[18px] -mt-[22px] bg-black" />
      </button>
    </div>
    <Combo label="モディファイヤ リスト" value="モディファイヤ リスト" className="mt-3 ml-6 w-[344px] h-[53px] bg-white" />

    <div className="mt-[11px] ml-9 w-[308px] shrink-0 grid grid-cols-2 gap-x-[7px] gap-y-[6px]">
      {[
        '押し出し',
        'ポリゴンを編集',
        'スウィープ',
        'UVW マップ',
        'FFD 4x4x4',
        'FFD(ボックス)',
        'ターボスムーズ',
        '面分割',
      ].map((b) => (
        <PushButton key={b} className="h-[42px]">
          {b}
        </PushButton>
      ))}
    </div>

    <div className="mt-[17px] ml-[23px] w-[341px] h-[202px] shrink-0 bg-white border-2 border-[#828790] px-[2px]">
      <div className="h-[35px] flex items-center pl-[16px]">
        <Icon box="0 0 22 28" className="w-[22px] h-7">
          <path d="M7 19C-4 12 1 1 11 1s15 11 4 18zM7 19h8v8H7zM7 23h8" stroke="#000" />
        </Icon>
        <span className="ml-[50px]">押し出し</span>
      </div>
      <div className="h-[36px] flex items-center pl-[11px] pr-[9px] bg-[#eeee80] border-y-2 border-[#8a8a60]">
        <Icon box="0 0 20 20" className="size-5">
          <path d="M0 0h20v20H0z" fill="#000" stroke="none" />
          <path d="M4 10h12M10 4v12" stroke="#eeee80" />
        </Icon>
        <span className="ml-[13px] flex-1">Line</span>
        <Icon box="0 0 30 20" className="w-[30px] h-5">
          <path d="M0 4h6M17 4h6M4 16h6M23 16h6M3 1v6M20 1v6M7 13v6M26 13v6" stroke="#000" />
        </Icon>
      </div>
    </div>

    <StackTools />
    <div className="mt-8 mx-2 h-1 shrink-0 bg-black border-b border-[#a0a0a0]" />

    <div className="mt-[15px] mb-[11px] ml-2 flex-1 min-h-0 flex border-b-2 border-white">
      <div className="w-[355px] pt-2 overflow-hidden border-t-2 border-[#a0a0a0] flex flex-col">
        <ClosedRoll title="レンダリング" />
        <div className="h-2 shrink-0" />
        <ClosedRoll title="補間" />

        <OpenRoll title="選択" className="pb-[26px]">
          <div className="mt-[17px] h-12 pl-[97px] flex items-center gap-[9px]">
            <button type="button" aria-label="頂点" className={clsx('w-[50px] h-12 bg-[#ffff00]', sunken)}>
              <Icon box="0 0 46 44" className="w-[46px] h-11">
                <path d="M4 18h7M28 18h7M15 31h7M38 31h7M8 15v7M31 15v7M19 28v7M42 28v7" stroke="#f00000" />
              </Icon>
            </button>
            <button type="button" aria-label="セグメント">
              <Icon box="0 0 37 20" className="w-[37px] h-5">
                <path d="M10 15L23 5" stroke="#f00000" strokeWidth={4} />
                <path d="M0 6l10 6M25 5l12 12" stroke="#f00000" strokeDasharray="3 4" />
              </Icon>
            </button>
            <button type="button" aria-label="スプライン" className="ml-[5px]">
              <Icon box="0 0 37 20" className="w-[37px] h-5">
                <path d="M1 9l9 7L23 4l13 12" stroke="#f00000" strokeWidth={4} />
              </Icon>
            </button>
          </div>

          <fieldset className="mt-[13px] ml-[13px] w-[322px] h-[81px] border-2 border-[#a0a0a0] px-4">
            <legend className="px-[2px] leading-7">名前付き選択 :</legend>
            <div className="mt-2 flex justify-between">
              <PushButton className="w-[133px] h-[38px]">コピー</PushButton>
              <PushButton className="w-[133px] h-[38px]" disabled>
                貼り付け
              </PushButton>
            </div>
          </fieldset>

          <div className="mt-[14px] ml-[13px] w-[322px] border-2 border-[#a0a0a0] pt-[11px] pl-[19px]">
            <Check label="ハンドルをロック" className="h-[34px]" />
            <div className="flex h-[34px] pl-[19px]">
              <Radio name="lock" label="同様" checked className="w-[134px]" />
              <Radio name="lock" label="すべて" />
            </div>
            <div className="flex items-center h-[54px]">
              <Check label="領域選択 :" className="w-[168px]" />
              <input
                aria-label="領域選択の距離"
                defaultValue="0.1"
                className={clsx('w-[73px] h-[34px] px-1 bg-white', sunken)}
              />
              <div className="ml-[3px] h-[34px]">
                <SpinArrows />
              </div>
            </div>
            <Check label="セグメントの終端" className="h-11" />
            <PushButton className="mt-[3px] ml-[57px] mb-[1px] w-[158px] h-[43px]">選択方法...</PushButton>
          </div>

          <fieldset className="mt-[13px] ml-[13px] w-[320px] h-[114px] border-2 border-[#a0a0a0] pl-4">
            <legend className="px-[2px] leading-7">表示</legend>
            <Check label="頂点番号を表示" className="h-10 pl-[22px]" />
            <Check label="選択のみ" disabled className="h-10 pl-[22px]" />
          </fieldset>
          <p className="h-[42px] leading-[42px] text-right pr-[14px]">8 個の頂点を選択</p>
        </OpenRoll>

        <div className="h-4 shrink-0" />
        <ClosedRoll title="ソフト選択" />

        <OpenRoll title="ジオメトリ">
          <fieldset className="mt-[14px] ml-[7px] h-[113px] border-2 border-r-0 border-[#a0a0a0] pl-2">
            <legend className="ml-2 px-[2px] leading-7">新規頂点タイプ</legend>
            <div className="flex h-[38px] mt-1">
              <Radio name="vertexType" label="線形" checked className="w-[136px]" />
              <Radio name="vertexType" label="ベジェ" />
            </div>
            <div className="flex h-[38px]">
              <Radio name="vertexType" label="スムーズ" className="w-[136px]" />
              <Radio name="vertexType" label="ベジェ コーナー" />
            </div>
          </fieldset>
          <div className="mt-[10px] ml-[9px] flex gap-[26px]">
            <PushButton className="w-[149px] h-[38px]">ラインを作成</PushButton>
            <PushButton className="w-[149px] h-[38px]">ブレーク</PushButton>
          </div>
          <div className="mt-[11px] ml-[9px] flex gap-[10px]">
            <div className="flex flex-col gap-[10px]">
              <PushButton className="w-[149px] h-[38px]">アタッチ</PushButton>
              <PushButton className="w-[149px] h-[38px]">複数アタッチ</PushButton>
            </div>
            <Check label="方向再設定" className="h-[78px]" />
          </div>
          <PushButton className="mt-2 ml-[9px] w-[168px] h-[38px]">クロス セクション</PushButton>
          <div className="mt-[14px] ml-[9px] mr-2 pt-[10px] pl-[10px] border-2 border-b-0 border-[#a0a0a0] flex">
            <PushButton className="w-[111px] h-[42px] mr-[31px]">リファイン</PushButton>
            <Check label="接続" className="h-[42px]" />
          </div>
        </OpenRoll>
      </div>
      <div className="w-[10px] flex flex-col bg-black">
        <div className="h-[492px] bg-[#a0a0a0] flex flex-col items-center justify-center gap-[2px] pt-[100px]">
          {[0, 1, 2, 3, 4].map((n) => (
            <div key={n} className="w-[6px] h-[2px] bg-white" />
          ))}
        </div>
      </div>
    </div>
  </aside>
);

/* ---------- time line ---------- */

const TimeSlider = () => (
  <div className="h-[42px] shrink-0 bg-[#bdbdbd] border-b-2 border-[#a0a0a0] text-[22px] leading-none">
    <div className="h-10 flex items-start border-b-3 border-white">
      <PushButton className="ml-[2px] w-[31px] h-9">&lt;</PushButton>
      <button
        type="button"
        className="w-[265px] h-9 bg-[#efefef] border-2 border-t-[#efefef] border-l-white border-r-black border-b-black"
      >
        0 / 100
      </button>
      <PushButton className="w-[31px] h-9">&gt;</PushButton>
    </div>
  </div>
);

const frames = Array.from({length: 101}, (_, i) => i);

const TrackBar = () => (
  <div className="h-[51px] shrink-0 flex bg-[#efefef]">
    <button
      type="button"
      aria-label="ミニ カーブ エディタを開く"
      className="w-[106px] shrink-0 flex items-center pl-7"
    >
      <Icon box="0 0 34 36" className="w-[34px] h-9">
        <path d="M1 2h32v10H1zM1 29h32v6H1zM12 29v6M23 29v6" stroke="#000" />
        <path d="M5 9l6-4 7 5 10-4M8 26V16M4 20l4-4 4 4M26 16v10M22 22l4 4 4-4" stroke="#000" />
      </Icon>
    </button>
    <div className="flex-1 bg-[#c8c8c8] border-b-3 border-white pl-[13px] pr-3 flex justify-between mr-[107px]">
      {frames.map((f) => (
        <div key={f} className="relative w-0 flex flex-col items-center">
          {f === 0 && <div className="absolute -left-[10px] top-0 w-5 h-[51px] bg-[#8fb3cc] border-2 border-[#5c86a4]" />}
          <div className={clsx('relative w-[2px] shrink-0 bg-[#7d8184]', f % 5 ? 'h-[23px]' : 'h-[27px]')} />
          {f % 5 === 0 && (
            <>
              <span className="relative text-[22px] leading-[20px]">{f}</span>
              <div className="relative w-[2px] h-1 shrink-0 bg-[#7d8184]" />
            </>
          )}
        </div>
      ))}
    </div>
  </div>
);

/* ---------- status bar ---------- */

const transportRow =
  'flex items-center justify-between h-[46px]';

const VLine = () => <div className="w-[2px] h-8 bg-[#a0a0a0] shrink-0" />;

const NavButton = ({label, children, flyout}: {label: string; children: ReactNode; flyout?: boolean}) => (
  <button type="button" aria-label={label} className="relative w-12 h-10 shrink-0 flex items-center justify-center">
    <Icon box="0 0 36 36" className="size-9">
      {children}
    </Icon>
    {flyout && (
      <svg viewBox="0 0 6 6" className="absolute right-[2px] bottom-[2px] size-[6px]" aria-hidden="true">
        <path d="M6 0v6H0z" fill="#000" />
      </svg>
    )}
  </button>
);

const Play = ({label, d, flyout}: {label: string; d: string; flyout?: boolean}) => (
  <button type="button" aria-label={label} className="relative">
    <Icon box="0 0 36 24" className="w-9 h-6">
      <path d={d} fill="#2d3138" stroke="none" />
    </Icon>
    {flyout && (
      <svg viewBox="0 0 6 6" className="absolute right-0 -bottom-[9px] size-[6px]" aria-hidden="true">
        <path d="M6 0v6H0z" fill="#000" />
      </svg>
    )}
  </button>
);

const CoordField = ({axis}: {axis: string}) => (
  <label className="flex items-center gap-[18px]">
    {axis}:
    <input type="text" className="w-[120px] h-11 px-1 bg-white border-3 border-t-[#222] border-l-[#222] border-r-white border-b-white" />
  </label>
);

const StatusBar = () => (
  <footer className="h-[106px] shrink-0 flex bg-[#efefef] text-[23px] leading-none whitespace-nowrap overflow-hidden">
    <div className="w-[206px] ml-[3px] shrink-0 pt-[6px] flex flex-col gap-[2px] [font-feature-settings:'palt']">
      <div className={clsx('h-[46px] bg-[#dac3c3]', sunken)} />
      <input
        aria-label="MAXScript リスナー"
        defaultValue="MAXScript によう"
        className={clsx('h-[46px] w-full px-[10px] pb-1 bg-white', sunken)}
      />
    </div>
    <div className="w-[2px] ml-[10px] mr-[5px] bg-[#a0a0a0]" />

    <div className="flex-1 min-w-0 pt-[10px] flex flex-col gap-[9px] [font-feature-settings:'palt']">
      <div className="h-11 flex items-center">
        <div className={clsx('flex-1 h-full flex items-center pl-3 text-[22px]', sunken)}>
          1 個のシェイプが選択されました
        </div>
        <div className="w-[172px] h-full flex items-center justify-between pl-[18px] pr-4">
          <Icon box="0 0 22 36" className="w-[22px] h-9">
            <ellipse cx="11" cy="12" rx="9" ry="11" fill="#d98b8b" stroke="#7d3a3a" />
            <path d="M9 24v11M13 24v11" />
          </Icon>
          <Icon box="0 0 24 36" className="w-6 h-9">
            <path d="M6 17V9a6 6 0 0 1 12 0v8" strokeWidth={3} />
            <path d="M2 17h20v16H2z" fill="#ecd3b4" />
            <path d="M12 22v8" />
          </Icon>
          <Icon box="0 0 34 34" className="size-[34px]">
            <path d="M1 1h32v32H1zM17 1v32M1 17h32" fill="#eceef2" />
            <circle cx="17" cy="17" r="7" fill="#fff" />
          </Icon>
        </div>
        <div className="flex gap-[31px] mr-[30px]">
          <CoordField axis="X" />
          <CoordField axis="Y" />
          <CoordField axis="Z" />
        </div>
        <div className={clsx('w-[210px] h-full flex items-center pl-2', sunken)}>グリッド = 10.0</div>
      </div>
      <div className="flex-1 flex">
        <div className={clsx('flex-1 flex items-center pl-3 border-b-0 text-[22px]', sunken)}>
          クリックまたはドラッグをして、オブジェクトを選択します
        </div>
        <button type="button" aria-label="選択を分離" className={clsx('w-12 ml-[6px] mr-[5px] flex items-center justify-center bg-[#30ffff]', sunken)}>
          <Icon box="0 0 30 30" className="size-[30px]">
            <path d="M4 8l5-6h18v20l-6 6H4z" fill="#fff" />
            <path d="M4 8h17l6-6M21 8v20" />
            <path d="M9 2v20h18M9 22l-5 6" stroke="#aaa" strokeWidth={1} />
          </Icon>
        </button>
        <button type="button" className={clsx('w-[210px] flex items-center pl-2', sunken)}>
          時間タグを追加
        </button>
      </div>
    </div>

    <PushButton className="w-[90px] h-[92px] mt-2 ml-2 shrink-0">
      <Icon box="0 0 52 26" className="w-[52px] h-[26px]">
        <circle cx="10" cy="12" r="8" stroke="#000" strokeWidth={4} />
        <path d="M18 12h34" stroke="#000" strokeWidth={5} />
        <path d="M38 12v11M46 12v11" stroke="#000" strokeWidth={4} />
      </Icon>
    </PushButton>
    <div className="flex flex-col gap-[2px] mt-2 ml-[9px] shrink-0 [font-feature-settings:'palt']">
      <PushButton className="w-[136px] h-[45px]">オート キー</PushButton>
      <PushButton className="w-[136px] h-[45px]">セット キー</PushButton>
    </div>
    <div className="w-[242px] ml-[7px] mt-2 shrink-0 flex flex-col gap-[6px] [font-feature-settings:'palt']">
      <Combo label="キー対象" value="選択" className="h-[42px] bg-linear-to-b from-[#f4f4f4] to-[#cfcfcf]" />
      <div className="flex">
        <button type="button" aria-label="新規キーの接線" className="w-14 flex items-center pl-[6px]">
          <Icon box="0 0 34 36" className="w-[34px] h-9">
            <path d="M12 4h20M0 32h20" stroke="#8c9be0" strokeWidth={4} />
            <path d="M2 16c3 8 4 16 8 16 6 0 6-28 12-28 4 0 6 6 8 14" stroke="#c01414" />
            <path d="M7 29h6v6H7zM19 1h6v6h-6z" fill={ink} stroke="none" />
          </Icon>
        </button>
        <PushButton className="flex-1 h-11">キー フィルタ...</PushButton>
      </div>
    </div>

    <div className="w-[241px] ml-[22px] mt-2 shrink-0">
      <div className={transportRow}>
        <Play label="開始へ移動" d="M0 0h4v24H0zM20 0v24L5 12zM35 0v24L20 12z" />
        <VLine />
        <Play label="前のフレーム" d="M14 0v24L0 12zM17 1h6v22h-6zM26 1h6v22h-6z" />
        <Play label="再生" d="M5 0v24l23-12z" flyout />
        <Play label="次のフレーム" d="M21 0v24l15-12zM3 1h6v22H3zM12 1h6v22h-6z" />
        <VLine />
        <Play label="終了へ移動" d="M31 0h4v24h-4zM0 0v24l15-12zM15 0v24l15-12z" />
      </div>
      <div className={transportRow}>
        <Play label="キー モード" d="M0 0h3v24H0zM33 0h3v24h-3zM16 2v20L4 12zM20 2v20l12-10z" />
        <VLine />
        <input
          aria-label="現在のフレーム"
          defaultValue="0"
          className="w-[134px] h-[42px] px-1 bg-white border-3 border-t-[#222] border-l-[#222] border-r-white border-b-white"
        />
        <div className="h-9">
          <SpinArrows />
        </div>
        <button type="button" aria-label="時間設定" className="-mr-4 ml-1">
          <Icon box="0 0 36 36" className="size-9">
            <path d="M1 1h28v34H1z" fill="#f2f3f5" />
            <path d="M5 5h13v12H5z" fill="#2d6aa8" />
            <circle cx="26" cy="26" r="9" fill="#fff" />
            <path d="M26 20v7h5" />
          </Icon>
        </button>
      </div>
    </div>

    <div className="w-[192px] ml-5 mr-[6px] mt-2 shrink-0">
      <div className={transportRow}>
        <NavButton label="ズーム">
          <circle cx="11" cy="14" r="9" fill="#e4f0f0" />
          <path d="M18 21l9 11" strokeWidth={5} />
          <path d="M25 7h10M30 2v10M25 15h10" />
        </NavButton>
        <NavButton label="すべてズーム">
          <path d="M2 2h28v28H2zM16 2v28M2 16h28" fill="#f2f3f5" />
          <circle cx="23" cy="22" r="7" fill="#e4f0f0" />
          <path d="M28 27l7 8" strokeWidth={4} />
        </NavButton>
        <NavButton label="全範囲ズーム" flyout>
          <path d="M1 7V1h6M29 1h6v6M1 29v6h6M29 35h6v-6" />
          <path d="M8 12l5-5h15v16l-5 6H8z" fill="#6f9f58" stroke="#3b5c2c" />
          <path d="M8 12h15l5-5" stroke="#3b5c2c" />
        </NavButton>
        <NavButton label="すべてのビューを全範囲ズーム" flyout>
          <path d="M9 1h26v26H9zM22 1v26M9 14h26" fill="#f2f3f5" />
          <path d="M1 20l5-5h15v14l-5 6H1z" fill="#6f9f58" stroke="#3b5c2c" />
          <path d="M1 20h15l5-5" stroke="#3b5c2c" />
        </NavButton>
      </div>
      <div className={transportRow}>
        <NavButton label="領域ズーム">
          <path d="M2 2h22v22H2z" strokeDasharray="5 3" />
          <circle cx="23" cy="23" r="7" fill="#e4f0f0" />
          <path d="M28 28l7 7" strokeWidth={4} />
        </NavButton>
        <NavButton label="ビューをパン" flyout>
          <path d="M12 34L2 20q0-4 5-1l3 3-3-14q2-4 5 0l2 9V4q2-4 5 0l1 12 3-11q3-3 4 1l-1 12 4-5q4-1 3 3l-6 18z" fill="#fff" />
        </NavButton>
        <NavButton label="オービット" flyout>
          <path d="M5 27q-1-16 13-17v14h14q-3 10-14 9-8 0-13-6z" fill="#dfe9e0" />
          <path d="M18 10q11 2 13 14H18z" fill="#7dbb68" />
          <path d="M18 1v24h18M18 25L2 35M14 5l4-4 4 4" stroke="#000" />
        </NavButton>
        <NavButton label="ビューポート最大化">
          <path d="M20 16h15v19H20z" fill="#fff" />
          <path d="M1 1h26v24H1z" fill="#f2f3f5" />
          <path d="M9 8l11 12M8 16V7h9" stroke="#111" strokeWidth={3} />
        </NavButton>
      </div>
    </div>
  </footer>
);

/* ---------- notes drawn over the window ---------- */

// opening brackets and commas are set half-width, the rest keeps its full width
const NoteLine = ({children}: {children: string}) => (
  <span className="block">
    {children.split(/([「、])/).map((part, i) =>
      part === '「' || part === '、' ? (
        <span key={i} className="[font-feature-settings:'halt']">
          {part}
        </span>
      ) : (
        part
      ),
    )}
  </span>
);

const Notes = () => (
  <div className="absolute inset-0 pointer-events-none text-[41px] font-[350] text-[#1d2088] whitespace-nowrap">
    <svg
      viewBox="0 0 4096 2914"
      preserveAspectRatio="none"
      className="absolute inset-0 size-full"
      fill="none"
      strokeWidth={7}
      aria-hidden="true"
    >
      <g stroke="#1d2088">
        <ellipse cx="363" cy="847" rx="89" ry="21" />
        <path d="M870 786L505 833" />
        <path d="M464 839l53-41q-11 18-5 34 0 17 12 31z" fill="#1d2088" stroke="none" />
        <ellipse cx="2329" cy="1809" rx="111" ry="82" />
        <path d="M2079 2200l164-274" />
        <path d="M2267 1883l-56 45q20-2 32 8 14 7 21 19z" fill="#1d2088" stroke="none" />
      </g>
      <g stroke="#e60012">
        <ellipse cx="3783" cy="2177" rx="89" ry="24" />
        <path d="M2829 844l844 1270" />
        <path d="M3695 2154l-6-66q-8 18-22 26-12 8-30 8z" fill="#e60012" stroke="none" />
      </g>
    </svg>
    <p className="absolute left-[876px] top-[746px] leading-[71px]">
      <NoteLine>※ラインの引き方によっては</NoteLine>
      <NoteLine>ベジェコーナー ( 曲線 ) になるので</NoteLine>
      <NoteLine>「頂点」を選択し右クリック、</NoteLine>
      <NoteLine>「コーナー」を選択する。</NoteLine>
    </p>
    <p className="absolute left-[2011px] top-[722px] leading-[72px] text-[#e60012]">
      <NoteLine>
        ②「修正」のヒストリーからラインに戻って「ラインの作成」を使い、①で作成した
      </NoteLine>
      <NoteLine>ラインの枠内に四角形などを作る。</NoteLine>
    </p>
    <p className="absolute left-[1450px] top-[2200px] leading-[72px]">
      <NoteLine>ベジェコーナー ( 曲線 ) になっている</NoteLine>
    </p>
  </div>
);

const App = () => (
  <div
    lang="ja"
    className="relative h-screen flex flex-col bg-white pt-[389px] pb-[390px] px-7 text-black font-['Noto_Sans','Noto_Sans_CJK_JP',sans-serif]"
  >
    <MenuBar />
    <MainToolbar />
    <div className="flex-1 min-h-0 flex">
      <Rail />
      <div className="flex-1 min-w-0 flex flex-col">
        <Viewport />
        <TimeSlider />
        <TrackBar />
      </div>
      <CommandPanel />
    </div>
    <StatusBar />
    <Notes />
  </div>
);

export default App;
